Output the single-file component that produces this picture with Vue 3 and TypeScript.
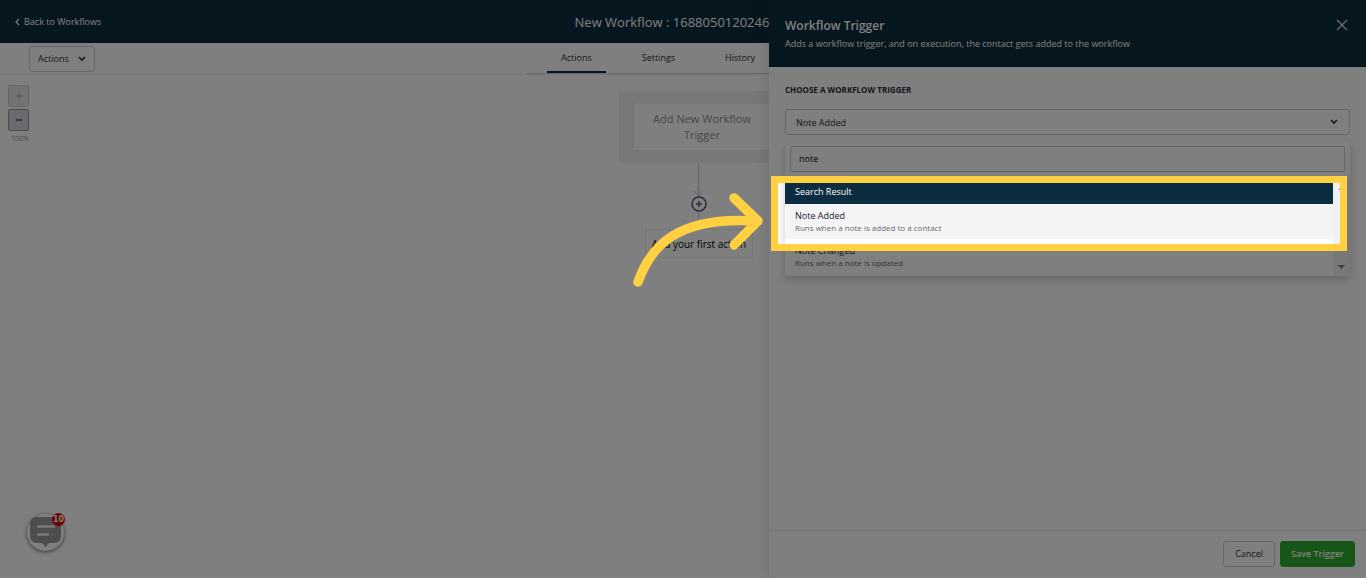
<script setup lang="ts">
import { ref } from 'vue'

interface Result {
  name: string
  hint: string
}

const tabs: string[] = ['Actions', 'Settings', 'History']
const activeTab = ref('Actions')
const trigger = ref('Note Added')
const query = ref('note')
const results: Result[] = [
  { name: 'Note Added', hint: 'Runs when a note is added to a contact' },
  { name: 'Note Changed', hint: 'Runs when a note is updated' },
]
const selected = ref('Note Added')
</script>

<template>
  <div class="app">
    <header class="topbar">
      <a class="back" href="#">
        <svg width="5" height="8" viewBox="0 0 5 8" aria-hidden="true">
          <path d="M4 1 1 4l3 3" fill="none" stroke="currentColor" stroke-width="1.1" />
        </svg>
        Back to Workflows
      </a>
      <h1>New Workflow : 1688050120246</h1>
    </header>

    <div class="toolbar">
      <button class="btn actions" type="button">
        Actions
        <svg width="8" height="6" viewBox="0 0 8 6" aria-hidden="true">
          <path d="M1 1l3 3 3-3" fill="none" stroke="currentColor" stroke-width="1.6" />
        </svg>
      </button>
      <nav class="tabs">
        <a
          v-for="tab in tabs"
          :key="tab"
          href="#"
          :class="{ active: tab === activeTab }"
          @click.prevent="activeTab = tab"
          >{{ tab }}</a
        >
      </nav>
    </div>

    <main class="canvas">
      <div class="zoom">
        <button type="button" class="faded" aria-label="Zoom in" disabled>
          <svg width="8" height="8" viewBox="0 0 8 8"><path d="M4 1.500v5M1.500 4h5" stroke="currentColor" stroke-width="1.5" /></svg>
        </button>
        <button type="button" aria-label="Zoom out">
          <svg width="8" height="8" viewBox="0 0 8 8"><path d="M1 4h6" stroke="currentColor" stroke-width="2" /></svg>
        </button>
        <span>100%</span>
      </div>
      <div class="flow">
        <div class="card"><button type="button">Add New Workflow Trigger</button></div>
        <svg class="link" width="16" height="66" viewBox="0 0 16 66" aria-hidden="true">
          <path d="M7.500 0v33M3 28l4.500 5 4.500-5" fill="none" stroke="#c4c7cc" />
          <circle cx="8" cy="41" r="7" fill="#fff" stroke="#4a6080" stroke-width="1.5" />
          <path d="M8 38v6M5 41h6" stroke="#4a6080" stroke-width="1.5" />
          <path d="M7.500 50v16" stroke="#c4c7cc" stroke-dasharray="5 3" />
        </svg>
        <button type="button" class="first">Add your first action</button>
      </div>
    </main>

    <button class="chat" type="button" aria-label="Messages">
      <svg width="33" height="33" viewBox="0 0 33 33" aria-hidden="true">
        <path
          d="M8 1h17q7 0 7 7v12q0 7-7 7h-4q-2 0-4.500 4.500Q14 27 12 27H8q-7 0-7-7V8q0-7 7-7z"
          fill="#9a9a9a"
        />
        <path d="M9 10.500h16M9 18.500h10" stroke="#f4f4f4" stroke-width="2.5" stroke-linecap="round" />
      </svg>
      <span>10</span>
    </button>

    <aside class="drawer">
      <header>
        <div>
          <h2>Workflow Trigger</h2>
          <p>Adds a workflow trigger, and on execution, the contact gets added to the workflow</p>
        </div>
        <button type="button" class="close" aria-label="Close">
          <svg width="12" height="12" viewBox="0 0 12 12"><path d="M1 1l10 10M11 1L1 11" stroke="currentColor" stroke-width="1.2" /></svg>
        </button>
      </header>

      <div class="body">
        <label for="trigger">CHOOSE A WORKFLOW TRIGGER</label>
        <div class="picker">
          <select id="trigger" v-model="trigger">
            <option v-for="r in results" :key="r.name">{{ r.name }}</option>
          </select>
          <svg width="8" height="6" viewBox="0 0 8 6" aria-hidden="true">
            <path d="M1 1l3 3 3-3" fill="none" stroke="currentColor" stroke-width="1.6" />
          </svg>
        </div>

        <div class="menu">
          <input v-model="query" type="text" aria-label="Search triggers" />
          <div class="results">
            <div class="list">
              <h3>Search Result</h3>
              <ul role="listbox" aria-label="Search Result">
                <li
                  v-for="r in results"
                  :key="r.name"
                  role="option"
                  :aria-selected="r.name === selected"
                  :class="{ selected: r.name === selected }"
                  @click="selected = r.name"
                >
                  <strong>{{ r.name }}</strong>
                  <small>{{ r.hint }}</small>
                </li>
              </ul>
            </div>
            <div class="track" aria-hidden="true">
              <svg width="7" height="4" viewBox="0 0 7 4"><path d="M0 4l3.500-4L7 4z" fill="#a3a3a3" /></svg>
              <svg width="7" height="4" viewBox="0 0 7 4"><path d="M0 0h7L3.500 4z" fill="#7c7c7c" /></svg>
            </div>
            <div class="spotlight"></div>
          </div>
        </div>
      </div>

      <footer>
        <button type="button" class="btn">Cancel</button>
        <button type="button" class="btn save">Save Trigger</button>
      </footer>

      <svg class="arrow" width="140" height="100" viewBox="630 190 140 100" aria-hidden="true">
        <path
          d="M638 282C650 248 675 216 755 221M734 198l24 23-24 24"
          fill="none"
          stroke="#ffd142"
          stroke-width="9.500"
          stroke-linecap="round"
          stroke-linejoin="round"
        />
      </svg>
    </aside>
  </div>
</template>

<style>
body {
  margin: 0;
}
</style>

<style scoped>
.app {
  position: relative;
  display: flex;
  flex-direction: column;
  min-height: 100vh;
  overflow: hidden;
  background: #fff;
  color: #2a3038;
  font-family: 'Open Sans', 'Noto Sans', sans-serif;
  font-size: 9px;
  line-height: 12px;
}
.app *,
.app *::before {
  box-sizing: border-box;
}
h1,
h2,
h3,
p,
ul {
  margin: 0;
  padding: 0;
  font-weight: 400;
}
button,
input,
select {
  font: inherit;
  color: inherit;
}
a {
  color: inherit;
  text-decoration: none;
}
svg {
  display: block;
}
.topbar {
  display: grid;
  grid-template-columns: 1fr auto 1fr;
  align-items: center;
  height: 43px;
  padding: 0 37px 0 15px;
  background: #0c2c3f;
  color: #fff;
}
.back {
  display: flex;
  align-items: center;
  gap: 4px;
}
h1 {
  font-size: 13px;
  line-height: 18px;
}
.toolbar {
  display: grid;
  grid-template-columns: 1fr 314px 1fr;
  align-items: center;
  height: 32px;
  border-bottom: 1px solid #ececec;
}
.btn {
  height: 26px;
  padding: 0 11px;
  border: 1px solid #c8ccd2;
  border-radius: 3px;
  background: #fff;
}
.actions {
  display: flex;
  align-items: center;
  justify-self: start;
  gap: 9px;
  margin-left: 29px;
  padding: 0 8px;
}
.tabs {
  display: flex;
  align-self: stretch;
  gap: 22px;
  padding-left: 21px;
  border-bottom: 1px solid #d8d8d8;
}
.tabs a {
  padding: 9px 14px 0;
  border-bottom: 2px solid transparent;
}
.tabs .active {
  border-color: #0c2c3f;
}
.canvas {
  position: relative;
  flex: 1;
}
.zoom {
  position: absolute;
  top: 10px;
  left: 8px;
  display: grid;
  gap: 2px;
  color: #8b9099;
  font-size: 7px;
}
.zoom button {
  display: grid;
  place-items: center;
  width: 21px;
  height: 22px;
  padding: 0;
  border: 1px solid #8f96a3;
  border-radius: 2px;
  background: #d3d6dd;
  color: #6b7280;
}
.zoom .faded {
  border-color: #c8ccd4;
  background: #e5e7eb;
  color: #b0b5bd;
}
.zoom span {
  padding-left: 3px;
}
.flow {
  display: flex;
  flex-direction: column;
  align-items: center;
  padding: 16px 0 0 32px;
}
.card {
  width: 166px;
  margin-left: 6px;
  padding: 12px 14px;
  border-radius: 3px;
  background: #f1f1f1;
}
.card button {
  width: 100%;
  height: 48px;
  padding: 0 16px;
  border: 1px dotted #dcdcdc;
  background: #fff;
  color: #8a9099;
  font-size: 11px;
  line-height: 16px;
}
.first {
  width: 108px;
  height: 29px;
  padding: 0;
  border: 1px dotted #dcdcdc;
  background: #fff;
  color: #000;
  font-size: 10px;
  white-space: nowrap;
}
.chat {
  position: absolute;
  bottom: 27px;
  left: 27px;
  display: grid;
  place-items: center;
  width: 37px;
  height: 37px;
  padding: 0;
  border: 0;
  border-radius: 50%;
  background: #fff;
  box-shadow: 0 1px 4px rgba(0, 0, 0, 0.6);
}
.chat span {
  position: absolute;
  top: -1px;
  right: -1px;
  width: 13px;
  height: 13px;
  border-radius: 50%;
  background: #d60000;
  color: #fff;
  font-family: 'DejaVu Sans', sans-serif;
  font-size: 8px;
  font-weight: 700;
  line-height: 13px;
}
.drawer {
  position: absolute;
  inset: 0 0 0 auto;
  display: flex;
  flex-direction: column;
  width: 597px;
  background: #fff;
  box-shadow: 0 0 14px rgba(0, 0, 0, 0.15);
}
.drawer header {
  display: flex;
  justify-content: space-between;
  align-items: flex-start;
  height: 67px;
  padding: 18px 18px 0 16px;
  background: #0c2c3f;
  color: #fff;
}
h2 {
  font-size: 12px;
  font-weight: 600;
  line-height: 16px;
}
header p {
  margin-top: 4px;
}
.close {
  margin-top: 1px;
  padding: 0;
  border: 0;
  background: none;
  color: #d5dce6;
}
.body {
  flex: 1;
  padding: 17px 16px;
}
label {
  display: block;
  font-size: 8px;
  font-weight: 700;
}
.picker {
  display: grid;
  align-items: center;
  margin-top: 13px;
}
.picker > * {
  grid-area: 1 / 1;
}
.picker svg {
  justify-self: end;
  margin-right: 12px;
}
select {
  appearance: none;
  width: 100%;
  height: 26px;
  padding: 1px 10px 0;
  border: 1px solid #c8ccd2;
  border-radius: 3px;
  background: #fff;
}
.menu {
  margin-top: 6px;
  padding-top: 5px;
  border-radius: 3px;
  box-shadow: 0 4px 10px rgba(0, 0, 0, 0.2);
}
input {
  display: block;
  width: calc(100% - 10px);
  height: 26px;
  margin: 0 5px;
  padding: 0 8px 2px;
  border: 1px solid #c8ccd2;
  border-radius: 2px;
  background: #fff;
  color: #000;
}
.results {
  position: relative;
  display: flex;
  margin-top: 5px;
}
.list {
  flex: 1;
}
h3 {
  padding: 9px 10px 6px;
  background: #0c2c3f;
  color: #fff;
  font-size: 9px;
  line-height: 12px;
}
ul {
  padding-bottom: 2px;
  list-style: none;
}
li {
  display: grid;
  padding: 6px 10px 5px;
  color: #1a1a24;
}
li.selected {
  background: #f2f4f6;
}
strong {
  font-weight: 400;
}
small {
  color: #6b6b6b;
  font-size: 8px;
}
.track {
  display: flex;
  flex-direction: column;
  justify-content: space-between;
  align-items: center;
  width: 17px;
  padding: 9px 0 7px;
  background: #f1f1f1;
}
.spotlight {
  position: absolute;
  top: -1px;
  right: 3px;
  left: -14px;
  height: 75px;
  border: 7px solid #ffd142;
  box-shadow: 0 0 0 3000px rgba(0, 0, 0, 0.5);
  pointer-events: none;
}
footer {
  display: flex;
  justify-content: flex-end;
  gap: 5px;
  padding: 10px 11px 11px;
  border-top: 1px solid #e2e2e2;
}
.save {
  padding: 0 10px;
  border-color: #2fac30;
  background: #2fac30;
  color: #fff;
  font-weight: 600;
}
.arrow {
  position: absolute;
  top: 190px;
  left: -139px;
}
</style>
